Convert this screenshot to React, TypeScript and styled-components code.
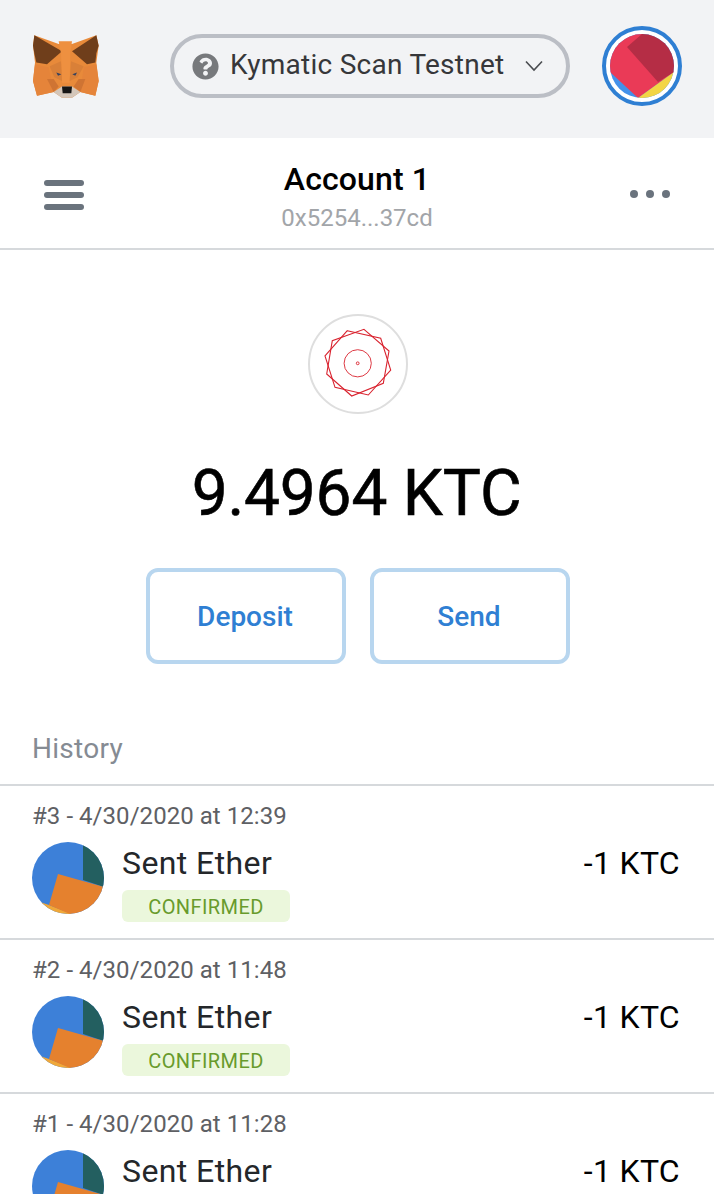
import { FC, ReactElement } from 'react';
import styled, { createGlobalStyle } from 'styled-components';
import { FaQuestionCircle } from 'react-icons/fa';

const GlobalStyle = createGlobalStyle`
    html, body {
        margin: 0;
        padding: 0;
        height: 100%;
        background: #fff;
        overflow: hidden;
    }
    * {
        box-sizing: border-box;
    }
`;

const Page = styled.div`
    width: 714px;
    height: 1194px;
    overflow: hidden;
    font-family: Roboto, "Liberation Sans", sans-serif;
    background: #fff;
    color: #000;
`;

const TopBar = styled.header`
    height: 138px;
    background: #f2f3f5;
    display: flex;
    align-items: flex-start;
    padding: 26px 32px 0 33px;
`;

const FoxSlot = styled.div`
    width: 67px;
    height: 80px;
    display: flex;
    align-items: center;
    flex: none;
`;

const NetworkPill = styled.div`
    width: 400px;
    height: 64px;
    margin: 8px 32px 0 70px;
    border: 4px solid #bbbec5;
    border-radius: 32px;
    display: flex;
    align-items: center;
    padding: 0 22px 0 18px;
    color: #36373a;
    font-size: 28px;
    line-height: 32px;
    letter-spacing: 0.26px;
    flex: none;

    .label {
        margin-top: -3px;
    }

    svg.help {
        color: #77797c;
        flex: none;
        margin-right: 11px;
    }

    svg.caret {
        margin-left: auto;
        flex: none;
    }
`;

const AvatarRing = styled.div`
    width: 80px;
    height: 80px;
    border: 4px solid #2f7fd3;
    border-radius: 50%;
    padding: 4px;
    background: #fff;
    flex: none;

    svg {
        display: block;
    }
`;

const AccountBar = styled.div`
    height: 112px;
    border-bottom: 2px solid #d6d9dc;
    display: grid;
    grid-template-columns: 1fr auto 1fr;
    align-items: center;
    padding: 0 44px;
`;

const Hamburger = styled.div`
    width: 40px;
    display: flex;
    flex-direction: column;
    gap: 6px;
    margin-top: 4px;

    span {
        height: 6px;
        border-radius: 3px;
        background: #6a737d;
    }
`;

const AccountInfo = styled.div`
    text-align: center;
    margin-top: 6px;
`;

const AccountName = styled.div`
    font-size: 32px;
    font-weight: 500;
    line-height: 40px;
    letter-spacing: 0.12px;
`;

const AccountAddress = styled.div`
    font-size: 24px;
    line-height: 30px;
    margin-top: 4px;
    color: #a2a5a9;
`;

const MoreDots = styled.div`
    justify-self: end;
    display: flex;
    gap: 8px;
    margin-top: 2px;

    span {
        width: 8px;
        height: 8px;
        border-radius: 50%;
        background: #6a737d;
    }
`;

const Balance = styled.section`
    display: flex;
    flex-direction: column;
    align-items: center;
    padding: 64px 0 0 2px;
`;

const TokenCircle = styled.div`
    width: 100px;
    height: 100px;
    border: 2px solid #dedede;
    border-radius: 50%;
    display: flex;
    align-items: center;
    justify-content: center;
`;

const Amount = styled.div`
    font-size: 64px;
    line-height: 76px;
    margin-top: 42px;
    margin-left: -3px;
    letter-spacing: -0.2px;
    -webkit-text-stroke: 0.6px #000;
`;

const Actions = styled.div`
    display: flex;
    gap: 24px;
    margin-top: 36px;
`;

const ActionButton = styled.button`
    width: 200px;
    height: 96px;
    background: #fff;
    border: 4px solid #b8d6ef;
    border-radius: 12px;
    color: #2f7fd3;
    font-family: inherit;
    font-size: 28px;
    font-weight: 500;
    padding: 0 2px 0 0;
`;

const HistoryTitle = styled.h2`
    margin: 67px 0 0;
    padding: 0 32px 17px;
    font-size: 28px;
    line-height: 36px;
    font-weight: 400;
    letter-spacing: 0.28px;
    color: #858b93;
    border-bottom: 2px solid #d6d9dc;
`;

const TxRow = styled.div`
    height: 154px;
    padding: 15px 34px 0 32px;
    border-bottom: 2px solid #d6d9dc;
`;

const TxDate = styled.div`
    font-size: 24px;
    line-height: 30px;
    letter-spacing: 0.05px;
    color: #5e6064;
`;

const TxBody = styled.div`
    display: flex;
    align-items: flex-start;
    margin-top: 11px;
`;

const TxIcon = styled.svg`
    width: 72px;
    height: 72px;
    flex: none;
    margin-right: 18px;
`;

const TxMiddle = styled.div`
    flex: 1;
`;

const TxTitle = styled.div`
    font-size: 32px;
    line-height: 42px;
    letter-spacing: 0.4px;
    color: #24272a;
`;

const StatusBadge = styled.div`
    width: 168px;
    height: 32px;
    margin-top: 6px;
    border-radius: 6px;
    background: #ebf7dc;
    color: #689b2c;
    font-size: 20px;
    line-height: 34px;
    text-align: center;
    letter-spacing: 0.4px;
`;

const TxAmount = styled.div`
    font-size: 32px;
    line-height: 42px;
    letter-spacing: 0.3px;
    color: #000;
`;

const FoxLogo: FC = (): ReactElement => (
    <svg width="67" height="63" viewBox="8 21 201 170" preserveAspectRatio="none">
        <polygon fill="#e88a3a" points="12,22 85,45 125,45 198,22 205,50 198,95 205,145 195,185 150,175 125,190 95,190 70,175 20,185 8,145 14,95 8,50" />
        <polygon fill="#6f3e1b" points="12,22 95,65 50,100 18,95 12,70 8,50" />
        <polygon fill="#6f3e1b" points="198,22 125,65 170,100 195,95 198,70 205,50" />
        <polygon fill="#ee9040" points="85,38 125,38 120,70 118,150 95,150 92,70" />
        <polygon fill="#e5843a" points="14,100 55,108 70,175 20,185 8,145" />
        <polygon fill="#e5843a" points="198,100 160,108 150,175 195,185 205,145" />
        <polygon fill="#d98038" points="58,105 92,92 95,145 72,135" />
        <polygon fill="#d98038" points="160,105 122,92 118,145 142,135" />
        <polygon fill="#cf7433" points="50,140 70,140 85,160 70,175" />
        <polygon fill="#cf7433" points="165,140 145,140 130,160 150,175" />
        <polygon fill="#d3c6ba" points="70,175 95,160 125,160 150,175 125,190 95,190" />
        <polygon fill="#161616" points="95,160 125,160 123,178 97,178" />
        <polygon fill="#33415f" points="78,122 93,127 83,131" />
        <polygon fill="#33415f" points="140,122 126,127 135,131" />
    </svg>
);

const AccountAvatar: FC = (): ReactElement => (
    <svg width="64" height="64" viewBox="0 0 64 64">
        <defs>
            <clipPath id="avatar-clip">
                <circle cx="32" cy="32" r="32" />
            </clipPath>
        </defs>
        <g clipPath="url(#avatar-clip)">
            <rect width="64" height="64" fill="#4391ea" />
            <polygon fill="#ea3a57" points="0,0 32,0 64,38 28,64 0,38" />
            <polygon fill="#b52d45" points="17,13 32,0 64,0 64,38 48,48" />
            <polygon fill="#f3d544" points="28,64 64,38 64,64" />
        </g>
    </svg>
);

const TokenMark: FC = (): ReactElement => (
    <svg width="96" height="96" viewBox="2 2 96 96" fill="none" stroke="#d9222e" strokeWidth="1.1">
        <polygon points="39.3,16.7 72.7,24.3 82.7,56 60.3,81 27,73.3 17,42" />
        <polygon points="56,15.3 81,37 75.3,69.3 43.7,82 18.7,60 24.3,26.7" />
        <circle cx="49.7" cy="49.3" r="13.6" strokeWidth="0.9" />
        <circle cx="49.7" cy="49.3" r="1.4" strokeWidth="0.9" />
    </svg>
);

const TxIdenticon: FC<{ clipId: string }> = ({ clipId }: { clipId: string }): ReactElement => (
    <TxIcon viewBox="0 0 72 72">
        <defs>
            <clipPath id={clipId}>
                <circle cx="36" cy="36" r="36" />
            </clipPath>
        </defs>
        <g clipPath={`url(#${clipId})`}>
            <rect width="72" height="72" fill="#3d80d8" />
            <polygon fill="#235f60" points="51,0 72,0 72,45 51,38" />
            <polygon fill="#f0a83a" points="8,60 17,63 40,72 8,72" />
            <polygon fill="#e5812e" points="26,32 72,45 72,72 38,72 17,63" />
        </g>
    </TxIcon>
);

interface ITx {
    id: number;
    date: string;
}

const txs: ITx[] = [
    { id: 3, date: '4/30/2020 at 12:39' },
    { id: 2, date: '4/30/2020 at 11:48' },
    { id: 1, date: '4/30/2020 at 11:28' },
];

const App: FC = (): ReactElement => {
    return (
        <Page>
            <GlobalStyle />
            <TopBar>
                <FoxSlot>
                    <FoxLogo />
                </FoxSlot>
                <NetworkPill>
                    <FaQuestionCircle className='help' size={27} />
                    <span className='label'>Kymatic Scan Testnet</span>
                    <svg className='caret' width="20" height="12" viewBox="0 0 20 12" fill="none" stroke="#4a4c50" strokeWidth="1.6">
                        <polyline points="2,1.5 10,10 18,1.5" />
                    </svg>
                </NetworkPill>
                <AvatarRing>
                    <AccountAvatar />
                </AvatarRing>
            </TopBar>
            <AccountBar>
                <Hamburger>
                    <span />
                    <span />
                    <span />
                </Hamburger>
                <AccountInfo>
                    <AccountName>Account 1</AccountName>
                    <AccountAddress>0x5254...37cd</AccountAddress>
                </AccountInfo>
                <MoreDots>
                    <span />
                    <span />
                    <span />
                </MoreDots>
            </AccountBar>
            <Balance>
                <TokenCircle>
                    <TokenMark />
                </TokenCircle>
                <Amount>9.4964 KTC</Amount>
                <Actions>
                    <ActionButton>Deposit</ActionButton>
                    <ActionButton>Send</ActionButton>
                </Actions>
            </Balance>
            <HistoryTitle>History</HistoryTitle>
            {txs.map((tx: ITx) => (
                <TxRow key={tx.id}>
                    <TxDate>#{tx.id} - {tx.date}</TxDate>
                    <TxBody>
                        <TxIdenticon clipId={`tx-clip-${tx.id}`} />
                        <TxMiddle>
                            <TxTitle>Sent Ether</TxTitle>
                            <StatusBadge>CONFIRMED</StatusBadge>
                        </TxMiddle>
                        <TxAmount>-1 KTC</TxAmount>
                    </TxBody>
                </TxRow>
            ))}
        </Page>
    );
};

export default App;
